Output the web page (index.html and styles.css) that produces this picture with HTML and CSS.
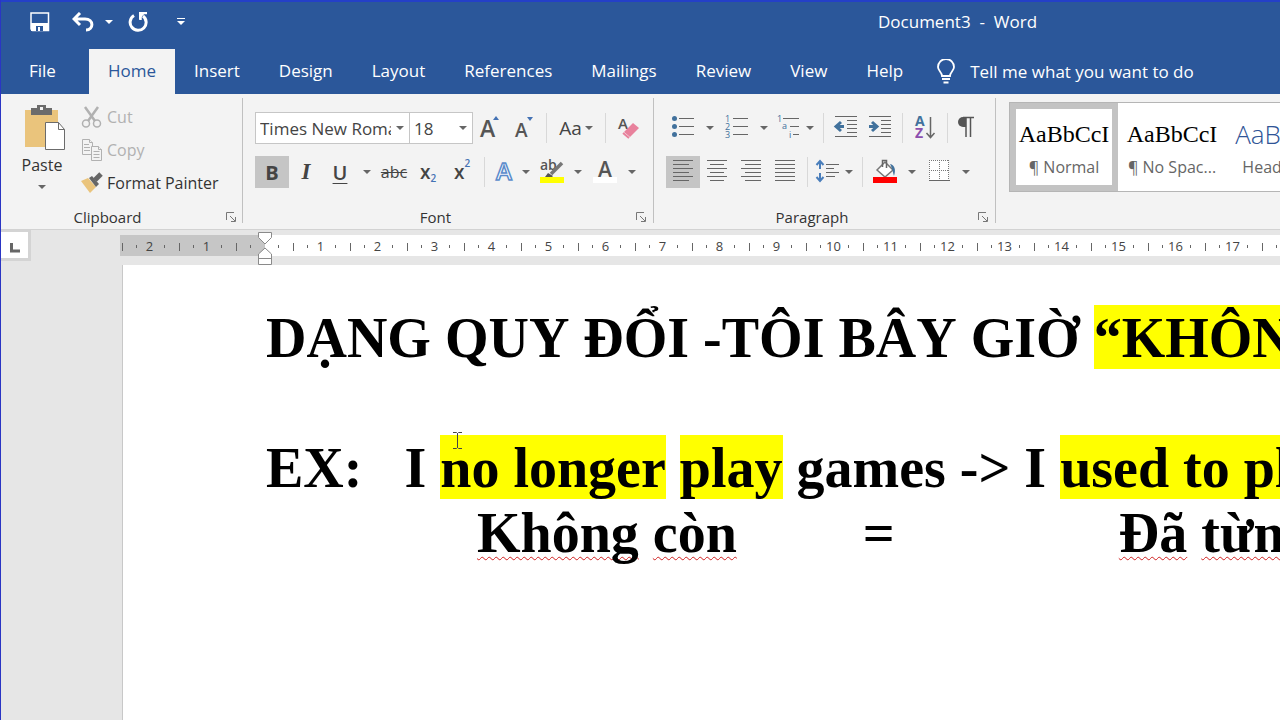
FILE: index.html
```
<!DOCTYPE html>
<html lang="en">

<head>
    <meta charset="UTF-8">
    <meta name="viewport" content="width=device-width, initial-scale=1.0">
    <title>Document3 - Word</title>
    <link rel="stylesheet" href="styles.css">
</head>

<body>

    <header class="titlebar">
        <div class="quick-access">
            <button class="quick" aria-label="Save">
                <svg width="20" height="20" viewBox="0 0 20 20" fill="none" stroke="#fff"><path d="M1 1h17.500v17.500H2.500L1 17z" stroke-width="1.500"/><path d="M1 11h17v8H1z" fill="#fff" stroke="none"/><path d="M6 14h7v5H6z" fill="#2b579a" stroke="none"/><path d="M8 15h2v4H8z" fill="#fff" stroke="none"/></svg>
            </button>
            <button class="quick" aria-label="Undo">
                <svg width="22" height="20" viewBox="0 0 22 20" fill="none" stroke="#fff" stroke-width="3"><path d="M8 1L2 7l6 6M3 7h10c9 0 9 11 1 11"/></svg>
            </button>
            <button class="quick-arrow" aria-label="Undo list"></button>
            <button class="quick quick-redo" aria-label="Repeat">
                <svg width="20" height="20" viewBox="0 0 20 20" fill="none" stroke="#fff" stroke-width="3"><path d="M6 3.500A8 8 0 1 0 15 4"/><path d="M11 1h8M12.500 0v8" stroke-width="2.500"/><path d="M11 1h6l-6 7z" fill="#fff" stroke="none"/></svg>
            </button>
            <button class="quick-arrow customize" aria-label="Customize toolbar"></button>
        </div>
        <div class="doc-title">Document3&nbsp; -&nbsp; Word</div>
    </header>

    <nav class="tabs">
        <a class="tab file" href="#">File</a>
        <a class="tab active" href="#">Home</a>
        <a class="tab" href="#">Insert</a>
        <a class="tab" href="#">Design</a>
        <a class="tab" href="#">Layout</a>
        <a class="tab" href="#">References</a>
        <a class="tab" href="#">Mailings</a>
        <a class="tab" href="#">Review</a>
        <a class="tab" href="#">View</a>
        <a class="tab" href="#">Help</a>
        <button class="tell-me">
            <svg width="18" height="25" viewBox="0 0 18 25" fill="none" stroke="#fff" stroke-width="1.800"><path d="M5 17c0-4-4-5-4-9a8 8 0 0 1 16 0c0 4-4 5-4 9zM5 20h8M6.500 23.500h5"/></svg>
            Tell me what you want to do
        </button>
    </nav>

    <div class="ribbon">
        <!-- Clipboard -->
        <section class="group clipboard">
            <div class="clip-tools">
                <button class="paste">
                    <svg width="42" height="48" viewBox="0 0 42 48"><path d="M1 6h33v37H1z" fill="#eac47c"/><path d="M7 4h6V1h9v3h6v7H7z" fill="#6b6b6b"/><path d="M16 3h3v3h-3z" fill="#f3f3f3"/><path d="M21.500 18.500h13l6 7v20h-19z" fill="#fff" stroke="#6b6b6b"/><path d="M34.500 18.500v7h6" fill="none" stroke="#6b6b6b"/></svg>
                    <span>Paste</span>
                    <i class="caret"></i>
                </button>
                <div class="clip-list">
                    <button class="clip" disabled>
                        <svg width="22" height="22" viewBox="0 0 22 22" fill="none" stroke="#b1b1b1" stroke-width="1.500"><circle cx="5" cy="17.500" r="3.500"/><circle cx="16" cy="17.500" r="3.500"/><path d="M4 1l10 14M17 1L7 15" stroke-width="2.500"/></svg>
                        Cut
                    </button>
                    <button class="clip" disabled>
                        <svg width="22" height="22" viewBox="0 0 22 22" fill="#f3f3f3" stroke="#b1b1b1"><path d="M1.500.5h7l3 3v12h-10z"/><path d="M8.500.5v3h3M3 5.500h5M3 8.500h6M3 11.500h6" /><path d="M10.500 7.500h7l3 3v11h-10z"/><path d="M17.500 7.500v3h3M12.500 12.500h6M12.500 15.500h6M12.500 18.500h6"/></svg>
                        Copy
                    </button>
                    <button class="clip">
                        <svg width="22" height="22" viewBox="0 0 22 22"><path d="M0 9l7-3 8 9-6 6z" fill="#eac47c"/><path d="M8 6l3-2 7 8-3 3z" fill="#666"/><path d="M14 8l6-6" stroke="#666" stroke-width="5"/></svg>
                        Format Painter
                    </button>
                </div>
            </div>
            <footer class="group-name">Clipboard<button class="launcher" aria-label="Clipboard options"><svg width="10" height="10" viewBox="0 0 10 10" fill="none" stroke="#777"><path d="M.5 8V.5H8M4 4l5 5M9.500 5v4.500H5"/></svg></button></footer>
        </section>

        <!-- Font -->
        <section class="group font">
            <div class="row">
                <div class="combo font-name">
                    <input type="text" value="Times New Roman" aria-label="Font">
                    <button class="arrow" aria-label="Font list"></button>
                </div>
                <div class="combo font-size">
                    <input type="text" value="18" aria-label="Font size">
                    <button class="arrow" aria-label="Font size list"></button>
                </div>
                <button class="tool" aria-label="Grow font"><svg viewBox="0 0 34 32"><text x="7" y="25" class="letter grow">A</text><path d="M20 8l3-4 3 4z" fill="#4472b4"/></svg></button>
                <button class="tool" aria-label="Shrink font"><svg viewBox="0 0 34 32"><text x="8" y="25" class="letter shrink">A</text><path d="M20 5h6l-3 4z" fill="#4472b4"/></svg></button>
                <span class="sep"></span>
                <button class="tool change-case">Aa<i class="caret"></i></button>
                <span class="sep"></span>
                <button class="tool" aria-label="Clear formatting"><svg viewBox="0 0 34 32"><text x="7" y="17" class="letter clear">A</text><path d="M13 20l9-9 6 5-9 9z" fill="#e8819c"/><path d="M12 21l6 5" stroke="#e8819c" stroke-width="2"/></svg></button>
            </div>
            <div class="row">
                <button class="tool bold on">B</button>
                <button class="tool italic">I</button>
                <button class="tool underline">U</button>
                <button class="arrow" aria-label="Underline style"></button>
                <button class="tool strike">abc</button>
                <button class="tool script" aria-label="Subscript">x<sub>2</sub></button>
                <button class="tool script" aria-label="Superscript">x<sup>2</sup></button>
                <span class="sep"></span>
                <button class="tool small" aria-label="Text effects"><svg viewBox="0 0 28 32"><text x="6" y="24" class="letter effects">A</text></svg></button>
                <button class="arrow small" aria-label="Text effects list"></button>
                <button class="tool" aria-label="Highlight color"><svg viewBox="0 0 34 32"><text x="6" y="14" class="letter mark">ab</text><path d="M11 21l3-4 5 3-2 2z" fill="#555"/><path d="M17 18L28 7" stroke="#777" stroke-width="3.500"/><path d="M6 21h24v6H6z" fill="#ff0"/></svg></button>
                <button class="arrow" aria-label="Highlight color list"></button>
                <button class="tool" aria-label="Font color"><svg viewBox="0 0 34 32"><path d="M5 21h24v6H5z" fill="#fff"/><text x="10" y="21" class="letter color">A</text></svg></button>
                <button class="arrow" aria-label="Font color list"></button>
            </div>
            <footer class="group-name">Font<button class="launcher" aria-label="Font options"><svg width="10" height="10" viewBox="0 0 10 10" fill="none" stroke="#777"><path d="M.5 8V.5H8M4 4l5 5M9.500 5v4.500H5"/></svg></button></footer>
        </section>

        <!-- Paragraph -->
        <section class="group paragraph">
            <div class="row">
                <button class="tool" aria-label="Bullets"><svg viewBox="0 0 34 32"><g fill="#41719c"><circle cx="8.500" cy="6.500" r="2.500"/><circle cx="8.500" cy="14.500" r="2.500"/><circle cx="8.500" cy="22.500" r="2.500"/></g><path d="M13 6.500h15M13 14.500h15M13 22.500h15" class="line"/></svg></button>
                <button class="arrow" aria-label="Bullet library"></button>
                <button class="tool" aria-label="Numbering"><svg viewBox="0 0 34 32"><g class="digits"><text x="5" y="10">1</text><text x="5" y="18">2</text><text x="5" y="26">3</text></g><path d="M13 6.500h15M13 14.500h15M13 22.500h15" class="line"/></svg></button>
                <button class="arrow" aria-label="Numbering library"></button>
                <button class="tool small" aria-label="Multilevel list"><svg viewBox="0 0 28 32"><g class="digits"><text x="3" y="10">1</text><text x="8" y="17">a</text><text x="15" y="26">i</text></g><path d="M9 6.500h16M16 14.500h9M19 22.500h6" class="line"/></svg></button>
                <button class="arrow small" aria-label="Multilevel list library"></button>
                <span class="sep"></span>
                <button class="tool" aria-label="Decrease indent"><svg viewBox="0 0 34 32"><path d="M6 4.500h22M18 8.500h10M18 12.500h10M18 16.500h10M18 20.500h10M6 24.500h22" class="line"/><path d="M15 14.500H8M12 10l-5 4.500 5 4.500" class="blue heavy"/></svg></button>
                <button class="tool" aria-label="Increase indent"><svg viewBox="0 0 34 32"><path d="M6 4.500h22M18 8.500h10M18 12.500h10M18 16.500h10M18 20.500h10M6 24.500h22" class="line"/><path d="M6 14.500h7M9 10l5 4.500-5 4.500" class="blue heavy"/></svg></button>
                <span class="sep"></span>
                <button class="tool" aria-label="Sort"><svg viewBox="0 0 34 32"><text x="7" y="14" class="sort-a">A</text><text x="7" y="26" class="sort-z">Z</text><path d="M22.500 5v20M18.500 21l4 4.500 4-4.500" fill="none" stroke="#666" stroke-width="1.500"/></svg></button>
                <span class="sep"></span>
                <button class="tool marks" aria-label="Show paragraph marks"><svg viewBox="0 0 28 32"><path d="M13 5h-3a5 5 0 0 0 0 10h3z" fill="#555"/><path d="M10 5.500h11M13 5v20M17.500 5v20" fill="none" stroke="#555" stroke-width="1.500"/></svg></button>
            </div>
            <div class="row">
                <button class="tool on" aria-label="Align left"><svg viewBox="0 0 34 32"><path d="M7 4.500h20M7 8.500h16M7 12.500h20M7 16.500h16M7 20.500h20M7 24.500h16" class="line"/></svg></button>
                <button class="tool" aria-label="Center"><svg viewBox="0 0 34 32"><path d="M7 4.500h20M10 8.500h14M7 12.500h20M10 16.500h14M7 20.500h20M10 24.500h14" class="line"/></svg></button>
                <button class="tool" aria-label="Align right"><svg viewBox="0 0 34 32"><path d="M7 4.500h20M11 8.500h16M7 12.500h20M11 16.500h16M7 20.500h20M11 24.500h16" class="line"/></svg></button>
                <button class="tool" aria-label="Justify"><svg viewBox="0 0 34 32"><path d="M7 4.500h20M7 8.500h20M7 12.500h20M7 16.500h20M7 20.500h20M7 24.500h20" class="line"/></svg></button>
                <span class="sep"></span>
                <button class="tool small" aria-label="Line spacing"><svg viewBox="0 0 28 32"><path d="M7 5v8M3.500 9L7 5l3.500 4M7 17v8M3.500 21L7 25l3.500-4" class="blue"/><path d="M13 8.500h13M13 12.500h8M13 16.500h13M13 20.500h9" class="line"/></svg></button>
                <button class="arrow small" aria-label="Line spacing list"></button>
                <span class="sep"></span>
                <button class="tool" aria-label="Shading"><svg viewBox="0 0 34 32"><path d="M9 14l8-8 8 8-8 7z" fill="#fff" stroke="#777" stroke-width="1.500"/><path d="M14.500 11V4.500h4V12" fill="none" stroke="#666" stroke-width="1.500"/><path d="M22 8c5 1 6 6 4 12-1-3-1-6-4-12z" fill="#41719c"/><path d="M5 21h24v6H5z" fill="#f00"/></svg></button>
                <button class="arrow" aria-label="Shading list"></button>
                <button class="tool" aria-label="Borders"><svg viewBox="0 0 34 32"><path d="M7 4h20v20H7z" fill="#fff"/><path d="M7 4.500h20M7 14.500h20M7.500 4v20M17.500 4v20M26.500 4v20" fill="none" stroke="#777" stroke-dasharray="1 1"/><path d="M7 24.500h21" class="line"/></svg></button>
                <button class="arrow" aria-label="Borders list"></button>
            </div>
            <footer class="group-name">Paragraph<button class="launcher" aria-label="Paragraph options"><svg width="10" height="10" viewBox="0 0 10 10" fill="none" stroke="#777"><path d="M.5 8V.5H8M4 4l5 5M9.500 5v4.500H5"/></svg></button></footer>
        </section>

        <!-- Styles -->
        <section class="group styles">
            <div class="gallery">
                <button class="style selected"><span class="sample">AaBbCcI</span><span class="style-name">¶ Normal</span></button>
                <button class="style"><span class="sample">AaBbCcI</span><span class="style-name">¶ No Spac...</span></button>
                <button class="style"><span class="sample heading">AaBbCc</span><span class="style-name">Heading 1</span></button>
            </div>
        </section>
    </div>

    <div class="ruler-bar">
        <button class="tab-stop" aria-label="Left tab"><svg width="10" height="10" viewBox="0 0 10 10" fill="none" stroke="#666" stroke-width="3"><path d="M1.500 0v8H10"/></svg></button>
        <ol class="ruler">
            <li>2</li>
            <li>1</li>
            <li class="origin">
                <svg class="indent" width="14" height="34" viewBox="0 0 14 34" fill="#fff" stroke="#8a8a8a"><path d="M.5.5h13v5L7 12 .5 5.500z"/><path d="M7 16l6.500 6v10.500H.5V22zM.5 26.500h13"/></svg>
            </li>
            <li>1</li>
            <li>2</li>
            <li>3</li>
            <li>4</li>
            <li>5</li>
            <li>6</li>
            <li>7</li>
            <li>8</li>
            <li>9</li>
            <li>10</li>
            <li>11</li>
            <li>12</li>
            <li>13</li>
            <li>14</li>
            <li>15</li>
            <li>16</li>
            <li>17</li>
            <li></li>
        </ol>
    </div>

    <main class="workspace">
        <article class="page">
            <p>DẠNG QUY ĐỔI -TÔI BÂY GIỜ <mark>“KHÔNG CÒN”</mark></p>
            <p><br></p>
            <p>EX:&nbsp;&nbsp; I <mark>no longer</mark> <mark>play</mark> games -&gt; I <mark>used to play</mark></p>
            <p class="meaning"><span class="typo">Không</span> <span class="typo">còn</span><span class="equals">=</span><span class="typo">Đã</span> <span class="typo">từng</span></p>
            <svg class="cursor" width="9" height="17" viewBox="0 0 9 17" fill="none" stroke="#444"><path d="M0 .5h3.500l1 1 1-1H9M4.500 1v15M0 16.500h3.500l1-1 1 1H9"/></svg>
        </article>
    </main>

</body>

</html>
```
FILE: styles.css
```
* {
    box-sizing: border-box;
}

body {
    margin: 0;
    height: 100vh;
    display: flex;
    flex-direction: column;
    overflow: hidden;
    border-left: 1px solid #2a35c4;
    background: #e6e6e6;
    color: #333;
    font-family: "Open Sans", "Noto Sans", sans-serif;
    font-size: 16px;
}

button {
    border: 0;
    padding: 0;
    background: none;
    color: inherit;
    font: inherit;
}

button svg {
    display: block;
    flex: none;
}

/* Title bar */
.titlebar {
    height: 49px;
    flex: none;
    display: flex;
    align-items: center;
    border-top: 2px solid #2440c8;
    padding-bottom: 8px;
    background: #2b579a;
    color: #fff;
    font-size: 17px;
}

.quick-access {
    flex: 1;
    display: flex;
    align-items: center;
    padding-left: 29px;
}

.quick {
    margin-right: 22px;
}

.quick + .quick {
    margin-right: 10px;
}

.quick-redo {
    margin: 0 28px 0 14px;
}

.quick-arrow {
    width: 10px;
    height: 10px;
    display: flex;
    flex-direction: column;
    align-items: center;
    justify-content: center;
    gap: 2px;
}

.quick-arrow::after {
    content: "";
    border: 4px solid transparent;
    border-top-color: #fff;
    border-bottom: 0;
}

.customize::before {
    content: "";
    width: 8px;
    border-top: 1px solid #fff;
}

.doc-title {
    flex: 0 0 402px;
}

/* Tabs */
.tabs {
    height: 45px;
    flex: none;
    display: flex;
    background: #2b579a;
    color: #fff;
    font-size: 17px;
    line-height: 44px;
    white-space: nowrap;
}

.tab {
    padding: 0 20px 0 19px;
    color: inherit;
    text-decoration: none;
}

.file {
    padding: 0 33px 0 28px;
}

.active {
    padding: 0 19px;
    background: #f3f3f3;
    color: #2b579a;
}

.tell-me {
    display: flex;
    align-items: center;
    gap: 15px;
    padding-left: 14px;
}

/* Ribbon */
.ribbon {
    height: 136px;
    flex: none;
    display: flex;
    padding: 4px 0 6px;
    border-bottom: 1px solid #d2d2d2;
    background: #f3f3f3;
}

.group {
    flex: none;
    display: flex;
    flex-direction: column;
    border-right: 1px solid #c0c0c0;
    padding: 14px 7px 0 12px;
}

.group-name {
    display: flex;
    justify-content: center;
    margin-top: auto;
    padding-right: 30px;
    font-size: 15px;
    line-height: 12px;
    position: relative;
}

.launcher {
    position: absolute;
    right: 0;
    top: 1px;
}

.caret,
.arrow::after {
    content: "";
    flex: none;
    border: 4px solid transparent;
    border-top-color: #666;
    border-bottom: 0;
}

.clipboard {
    width: 242px;
    padding: 6px 6px 0 16px;
}

.clipboard .group-name {
    padding-right: 38px;
}

.clip-tools {
    display: flex;
}

.paste {
    width: 50px;
    display: flex;
    flex-direction: column;
    align-items: center;
    font-size: 16px;
}

.paste svg {
    margin: 0 0 2px 6px;
}

.paste .caret {
    margin-top: 9px;
}

.clip-list {
    display: flex;
    flex-direction: column;
    padding-left: 14px;
}

.clip {
    height: 33px;
    display: flex;
    align-items: center;
    gap: 4px;
    padding-bottom: 8px;
    font-size: 16px;
    white-space: nowrap;
}

.clip:disabled {
    color: #b1b1b1;
}

.font {
    width: 411px;
}

.paragraph {
    width: 342px;
}

.row {
    height: 32px;
    display: flex;
    align-items: center;
    margin-bottom: 12px;
}

.combo {
    height: 32px;
    display: flex;
    border: 1px solid #c6c6c6;
    background: #fff;
}

.combo input {
    min-width: 0;
    flex: 1;
    border: 0;
    padding: 0 0 0 4px;
    background: none;
    color: #444;
    font: inherit;
    font-size: 17px;
}

.font-name {
    width: 155px;
}

.font-size {
    width: 64px;
    margin-left: -1px;
}

.tool {
    width: 34px;
    height: 32px;
    flex: none;
    display: flex;
    align-items: center;
    justify-content: center;
    color: #444;
}

.tool svg {
    width: 100%;
    height: 32px;
}

.tool.small,
.tool.marks {
    width: 28px;
}

.on {
    background: #c5c5c5;
}

.arrow {
    width: 20px;
    height: 32px;
    flex: none;
    display: flex;
    align-items: center;
    justify-content: center;
}

.arrow.small {
    width: 16px;
}

.combo .arrow {
    width: 18px;
    height: 30px;
}

.sep {
    height: 30px;
    margin: 0 5px;
    border-left: 1px solid #d8d8d8;
}

.change-case {
    width: 48px;
    gap: 3px;
    font-size: 19px;
}

.bold,
.underline {
    font-size: 20px;
    font-weight: bold;
}

.italic {
    font-family: "Liberation Serif", serif;
    font-size: 23px;
    font-style: italic;
    font-weight: bold;
}

.underline {
    text-decoration: underline;
    text-decoration-thickness: 1px;
    text-underline-offset: 3px;
    font-weight: 600;
}

.strike {
    text-decoration: line-through;
}

.script {
    font-size: 19px;
    font-weight: 600;
}

.script sub,
.script sup {
    color: #4472b4;
    font-size: 10px;
    line-height: 10px;
}

.script sub {
    align-self: flex-end;
    padding-bottom: 5px;
}

.script sup {
    align-self: flex-start;
    padding-top: 2px;
}

/* Icon drawing */
.letter {
    fill: #555;
    font-weight: 600;
}

.grow {
    font-size: 23px;
}

.shrink {
    font-size: 19px;
}

.clear {
    font-size: 15px;
}

.mark {
    font-size: 14px;
}

.color {
    font-size: 21px;
}

.effects {
    fill: #fff;
    stroke: #5b8ccb;
    stroke-width: 1.5;
    font-size: 24px;
}

.digits {
    fill: #41719c;
    font-size: 9px;
}

.sort-a,
.sort-z {
    fill: #41719c;
    font-size: 14px;
    font-weight: bold;
}

.sort-z {
    fill: #8c4fae;
}

.line {
    fill: none;
    stroke: #666;
}

.blue {
    fill: none;
    stroke: #4a7ebb;
    stroke-width: 2;
}

.heavy {
    stroke: #41719c;
    stroke-width: 3;
}

/* Style gallery */
.styles {
    flex: 1;
    min-width: 0;
    overflow: hidden;
    border: 0;
    padding: 4px 0 0 13px;
}

.gallery {
    display: flex;
    height: 90px;
    border: 1px solid #b5b5b5;
    border-right: 0;
    background: #fff;
    overflow: hidden;
}

.style {
    width: 108px;
    flex: none;
    display: flex;
    flex-direction: column;
    align-items: center;
    justify-content: center;
    gap: 6px;
    border: 6px solid transparent;
    padding-top: 4px;
    white-space: nowrap;
}

.selected {
    border-color: #c3c3c3;
}

.sample {
    color: #000;
    font-family: "Liberation Serif", serif;
    font-size: 24px;
    line-height: 30px;
}

.heading {
    color: #2f5496;
    font-family: "Open Sans", sans-serif;
    font-size: 26px;
    font-weight: 300;
}

.style-name {
    color: #666;
    font-size: 16px;
    line-height: 24px;
}

/* Ruler */
.ruler-bar {
    height: 35px;
    flex: none;
    display: flex;
    align-items: flex-start;
    overflow: hidden;
}

.tab-stop {
    width: 30px;
    height: 31px;
    display: flex;
    align-items: center;
    justify-content: center;
    margin-right: 89px;
    border: solid #d4d4d4;
    border-width: 2px 3px 3px 0;
    padding-top: 6px;
    background: #fff;
    flex: none;
}

.ruler {
    flex: 1;
    display: flex;
    margin: 5px 0 0;
    padding: 0 0 0 1px;
    height: 21px;
    background: linear-gradient(to right, #c6c6c6 145px, #fff 145px);
    list-style: none;
}

/* one centimetre: tick, quarter mark, number, quarter mark */
.ruler li {
    width: 57px;
    flex: none;
    background:
        linear-gradient(#666, #666) 1px 8px / 1px 8px no-repeat,
        linear-gradient(#666, #666) 15px 10px / 1px 3px no-repeat,
        linear-gradient(#666, #666) 43px 10px / 1px 3px no-repeat;
    color: #444;
    font-size: 13px;
    line-height: 22px;
    text-align: center;
}

.origin {
    position: relative;
}

.indent {
    position: absolute;
    left: 23px;
    top: -3px;
}

/* Document */
.workspace {
    flex: 1;
    min-height: 0;
    padding-left: 121px;
}

.page {
    height: 100%;
    padding: 41px 0 0 143px;
    border-left: 1px solid #c8c8c8;
    background: #fff;
    color: #000;
    font-family: "Liberation Serif", "Times New Roman", serif;
    font-size: 56px;
    font-weight: bold;
    font-kerning: none;
    line-height: 65px;
    white-space: nowrap;
    overflow: hidden;
    position: relative;
}

.page p {
    margin: 0;
}

.page mark {
    padding: 2px 0 0;
    background: #ff0;
    color: #000;
}

.meaning {
    padding-left: 211px;
}

.typo {
    text-decoration: underline wavy #d02020 1px;
    text-decoration-skip-ink: none;
    text-underline-offset: 4px;
}

.equals {
    margin: 0 224px 0 126px;
}

.cursor {
    position: absolute;
    left: 330px;
    top: 167px;
}
```
